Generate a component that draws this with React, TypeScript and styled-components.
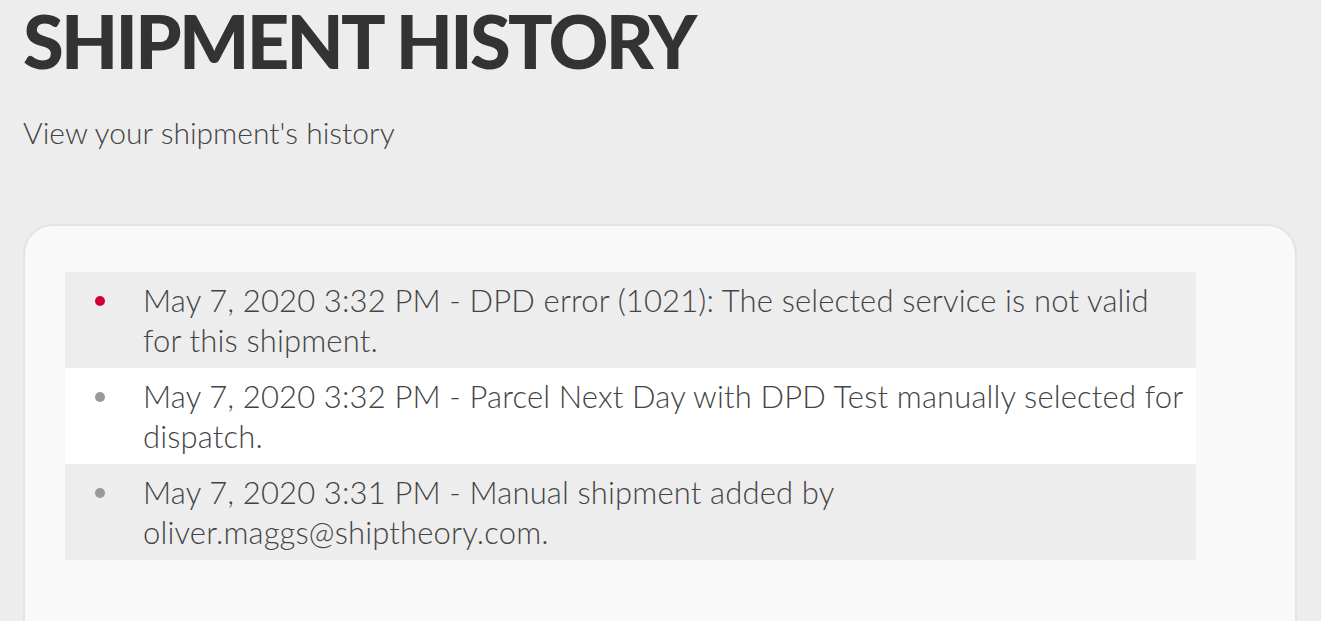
import React from 'react';
import styled, { createGlobalStyle } from 'styled-components';

const GlobalStyle = createGlobalStyle`
  html, body {
    margin: 0;
    padding: 0;
    background-color: #ededed;
    font-family: Lato, 'Open Sans', sans-serif;
    color: #444;
  }
`;

const Page = styled.div`
  padding: 0 24px 0 23px;
`;

const Title = styled.h1`
  margin: 0;
  padding-top: 1px;
  font-size: 74px;
  line-height: 80px;
  font-weight: 900;
  color: #333;
  letter-spacing: -2.7px;
`;

const Subtitle = styled.p`
  margin: 31px 0 0;
  font-size: 30px;
  line-height: 40px;
  font-weight: 300;
  color: #444;
`;

const Card = styled.section`
  margin-top: 72px;
  min-height: 500px;
  padding: 46px 99px 40px 40px;
  background-color: #f9f9f9;
  border: 2px solid #e3e3e3;
  border-radius: 30px;
`;

const HistoryList = styled.ul`
  margin: 0;
  padding: 0;
  list-style: none;
`;

const HistoryItem = styled.li<{ $striped: boolean }>`
  display: flex;
  align-items: flex-start;
  padding: 8px 6px 8px 30px;
  background-color: ${({ $striped }) => ($striped ? '#ededed' : '#ffffff')};
`;

const Bullet = styled.span<{ $tone: 'error' | 'info' }>`
  flex: none;
  width: 10px;
  height: 10px;
  margin: 16px 38px 0 0;
  border-radius: 50%;
  background-color: ${({ $tone }) => ($tone === 'error' ? '#d4003c' : '#999')};
`;

const Entry = styled.span`
  font-size: 31px;
  line-height: 40px;
  font-weight: 300;
  letter-spacing: 0.15px;
  color: #444;
`;

const entries: { text: string; tone: 'error' | 'info' }[] = [
  {
    text: 'May 7, 2020 3:32 PM - DPD error (1021): The selected service is not valid for this shipment.',
    tone: 'error',
  },
  {
    text: 'May 7, 2020 3:32 PM - Parcel Next Day with DPD Test manually selected for dispatch.',
    tone: 'info',
  },
  {
    text: 'May 7, 2020 3:31 PM - Manual shipment added by oliver.maggs@shiptheory.com.',
    tone: 'info',
  },
];

const App = () => (
  <Page>
    <GlobalStyle />
    <Title>SHIPMENT HISTORY</Title>
    <Subtitle>View your shipment's history</Subtitle>
    <Card>
      <HistoryList>
        {entries.map((entry, i) => (
          <HistoryItem key={i} $striped={i % 2 === 0}>
            <Bullet $tone={entry.tone} />
            <Entry>{entry.text}</Entry>
          </HistoryItem>
        ))}
      </HistoryList>
    </Card>
  </Page>
);

export default App;
